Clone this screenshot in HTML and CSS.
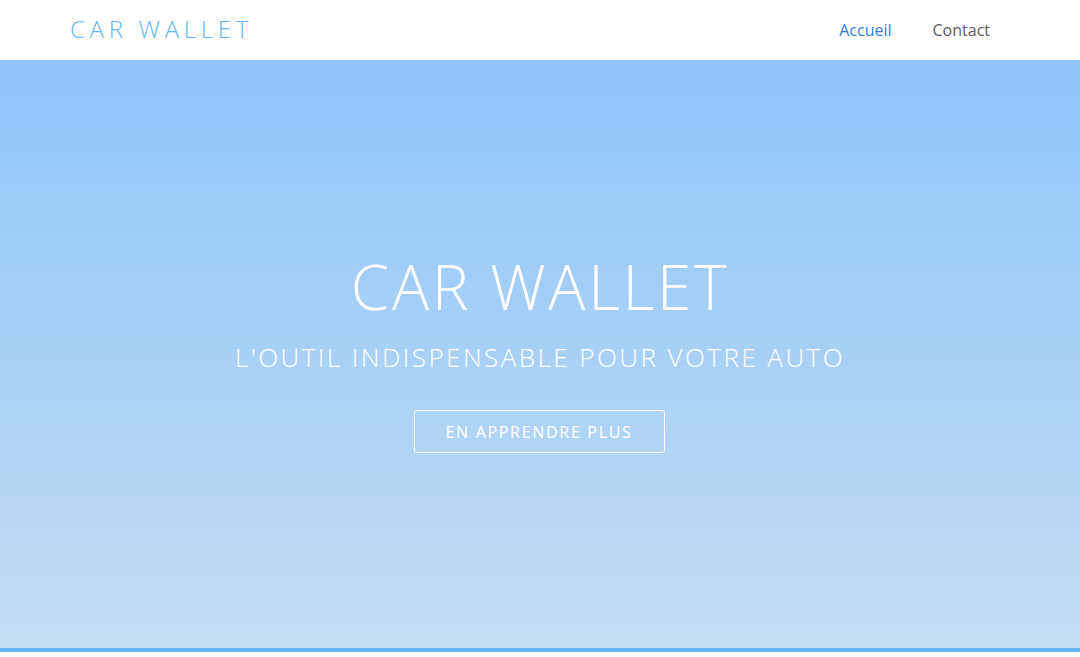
FILE: index.html
```html
<!DOCTYPE html>
<html lang="fr">
<head>
<meta charset="utf-8">
<title>Car Wallet</title>
<link rel="stylesheet" href="styles.css">
</head>
<body>
<header class="navbar">
  <a class="brand" href="#">CAR WALLET</a>
  <nav class="nav">
    <a class="nav-link active" href="#">Accueil</a>
    <a class="nav-link" href="#">Contact</a>
  </nav>
</header>
<section class="hero">
  <h1 class="hero-title">CAR WALLET</h1>
  <p class="hero-sub">L'OUTIL INDISPENSABLE POUR VOTRE AUTO</p>
  <a class="hero-btn" href="#">EN APPRENDRE PLUS</a>
</section>
<div class="bar"></div>
</body>
</html>
```
FILE: styles.css
```css
* { box-sizing: border-box; }
html, body { margin: 0; padding: 0; }
body {
  font-family: "Open Sans", "Liberation Sans", sans-serif;
  background: #fff;
  height: 657px;
  overflow: hidden;
}
.navbar {
  height: 60px;
  display: flex;
  align-items: center;
  justify-content: space-between;
  padding: 0 90px 0 70px;
  background: #fff;
}
.brand {
  font-size: 24px;
  font-weight: 300;
  letter-spacing: 4.7px;
  color: #64b5f6;
  text-decoration: none;
  margin-top: -3px;
}
.nav { display: flex; gap: 41px; }
.nav-link {
  font-size: 16px;
  color: #5a5a66;
  text-decoration: none;
}
.nav-link.active { color: #2f80e3; margin-left: 1px; }
.hero {
  height: 588px;
  background: linear-gradient(to bottom, #8fc5f8 0%, #c2ddf4 100%);
  display: flex;
  flex-direction: column;
  align-items: center;
  padding-top: 186px;
  color: #fff;
}
.hero-title {
  margin: 0;
  font-size: 62px;
  font-weight: 300;
  letter-spacing: 2.7px;
  line-height: 80px;
}
.hero-sub {
  margin: 13px 0 0;
  font-size: 26px;
  font-weight: 300;
  letter-spacing: 2.45px;
  line-height: 36px;
}
.hero-btn {
  margin-top: 35px;
  width: 251px;
  height: 43px;
  display: flex;
  align-items: center;
  justify-content: center;
  border: 1px solid #fff;
  border-radius: 3px;
  color: #fff;
  text-decoration: none;
  font-size: 16px;
  letter-spacing: 1.7px;
  font-weight: 400;
  margin-left: -2px;
}
.bar { height: 4px; background: #64b5f6; }
```
